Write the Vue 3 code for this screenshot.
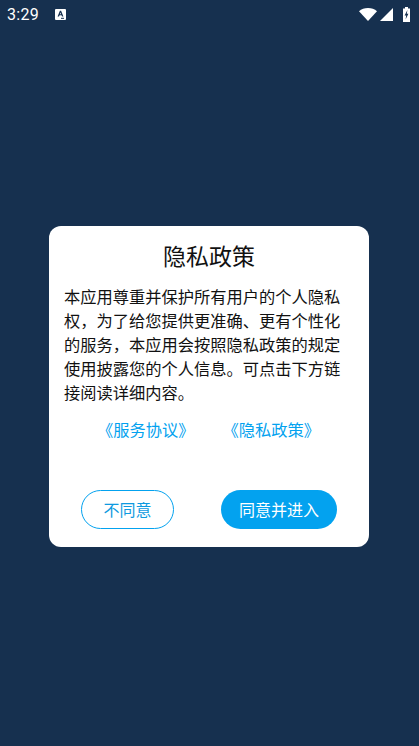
<script setup>
const links = ['《服务协议》', '《隐私政策》']
</script>

<template>
  <div class="screen">
    <header class="status">
      <div class="left">
        <span class="time">3:29</span>
        <svg class="note" width="11" height="11" viewBox="0 0 11 11">
          <rect width="11" height="11" rx="1" fill="#fff" />
          <path d="M2.6 7.6 4.9 1.8H6.1L8.4 7.6H7L6.5 6.3H4.5L4 7.6ZM4.9 5.3H6.1L5.5 3.6Z" fill="#16304f" />
          <rect x="6" y="8.8" width="3" height="1" fill="#16304f" />
        </svg>
      </div>
      <div class="right">
        <svg width="18" height="13" viewBox="0 0 18 13"><path d="M0 3.2C2.4 1.1 5.5 0 9 0s6.6 1.1 9 3.2L9 13Z" fill="#fff" /></svg>
        <svg width="13" height="13" viewBox="0 0 13 13"><path d="M13 0V13H0Z" fill="#fff" /></svg>
        <svg class="battery" width="7" height="15" viewBox="0 0 7 15">
          <path d="M2 0H5V1.4H7V15H0V1.4H2Z" fill="#fff" />
          <path d="M4.4 3 1.6 8.4H3.2L2.6 12.6 5.4 6.8H3.8Z" fill="#16304f" />
        </svg>
      </div>
    </header>

    <main class="center">
      <section class="card">
        <h1 class="title">隐私政策</h1>
        <p class="body">本应用尊重并保护所有用户的个人隐私权，为了给您提供更准确、更有个性化的服务，本应用会按照隐私政策的规定使用披露您的个人信息。可点击下方链接阅读详细内容。</p>
        <div class="links">
          <span v-for="l in links" :key="l" class="link">{{ l }}</span>
        </div>
        <div class="actions">
          <button class="btn outline">不同意</button>
          <button class="btn solid">同意并进入</button>
        </div>
      </section>
    </main>
  </div>
</template>

<style scoped>
.screen {
  width: 419px;
  height: 746px;
  background: #16304f;
  display: flex;
  flex-direction: column;
  overflow: hidden;
  font-family: "Noto Sans CJK SC", "Noto Sans", sans-serif;
}
.status {
  height: 29px;
  flex: none;
  display: flex;
  justify-content: space-between;
  align-items: center;
  padding: 0 9px 0 7px;
  color: #fff;
}
.left {
  display: flex;
  align-items: center;
  gap: 16px;
}
.time {
  font-family: Roboto, sans-serif;
  font-size: 16px;
  letter-spacing: 0.3px;
}
.right {
  display: flex;
  align-items: center;
  gap: 3px;
}
.battery {
  margin-left: 7px;
}
.center {
  flex: 1;
  display: flex;
  justify-content: center;
  padding: 197px 1px 0 0;
}
.card {
  width: 320px;
  height: 321px;
  box-sizing: border-box;
  background: #fff;
  border-radius: 12px;
  padding: 0 15px;
  display: flex;
  flex-direction: column;
}
.title {
  margin: 13px 0 0;
  height: 33px;
  line-height: 33px;
  font-size: 23px;
  font-weight: 400;
  text-align: center;
  color: #111;
}
.body {
  margin: 12px 0 0;
  font-size: 16.25px;
  line-height: 24px;
  color: #111;
}
.links {
  margin-top: 13px;
  display: flex;
  justify-content: center;
  gap: 28px;
  padding-right: 1px;
}
.link {
  font-size: 16.25px;
  line-height: 24px;
  color: #03a2ef;
}
.actions {
  margin-top: 49px;
  display: flex;
  justify-content: space-between;
  padding: 0 17px;
}
.btn {
  height: 39px;
  box-sizing: border-box;
  border-radius: 20px;
  font-family: inherit;
  font-size: 16px;
  padding: 0 0 2px;
}
.outline {
  width: 93px;
  background: #fff;
  border: 1px solid #03a2ef;
  color: #0e9ae0;
}
.solid {
  width: 116px;
  background: #03a2ef;
  border: none;
  color: #fff;
}
</style>
